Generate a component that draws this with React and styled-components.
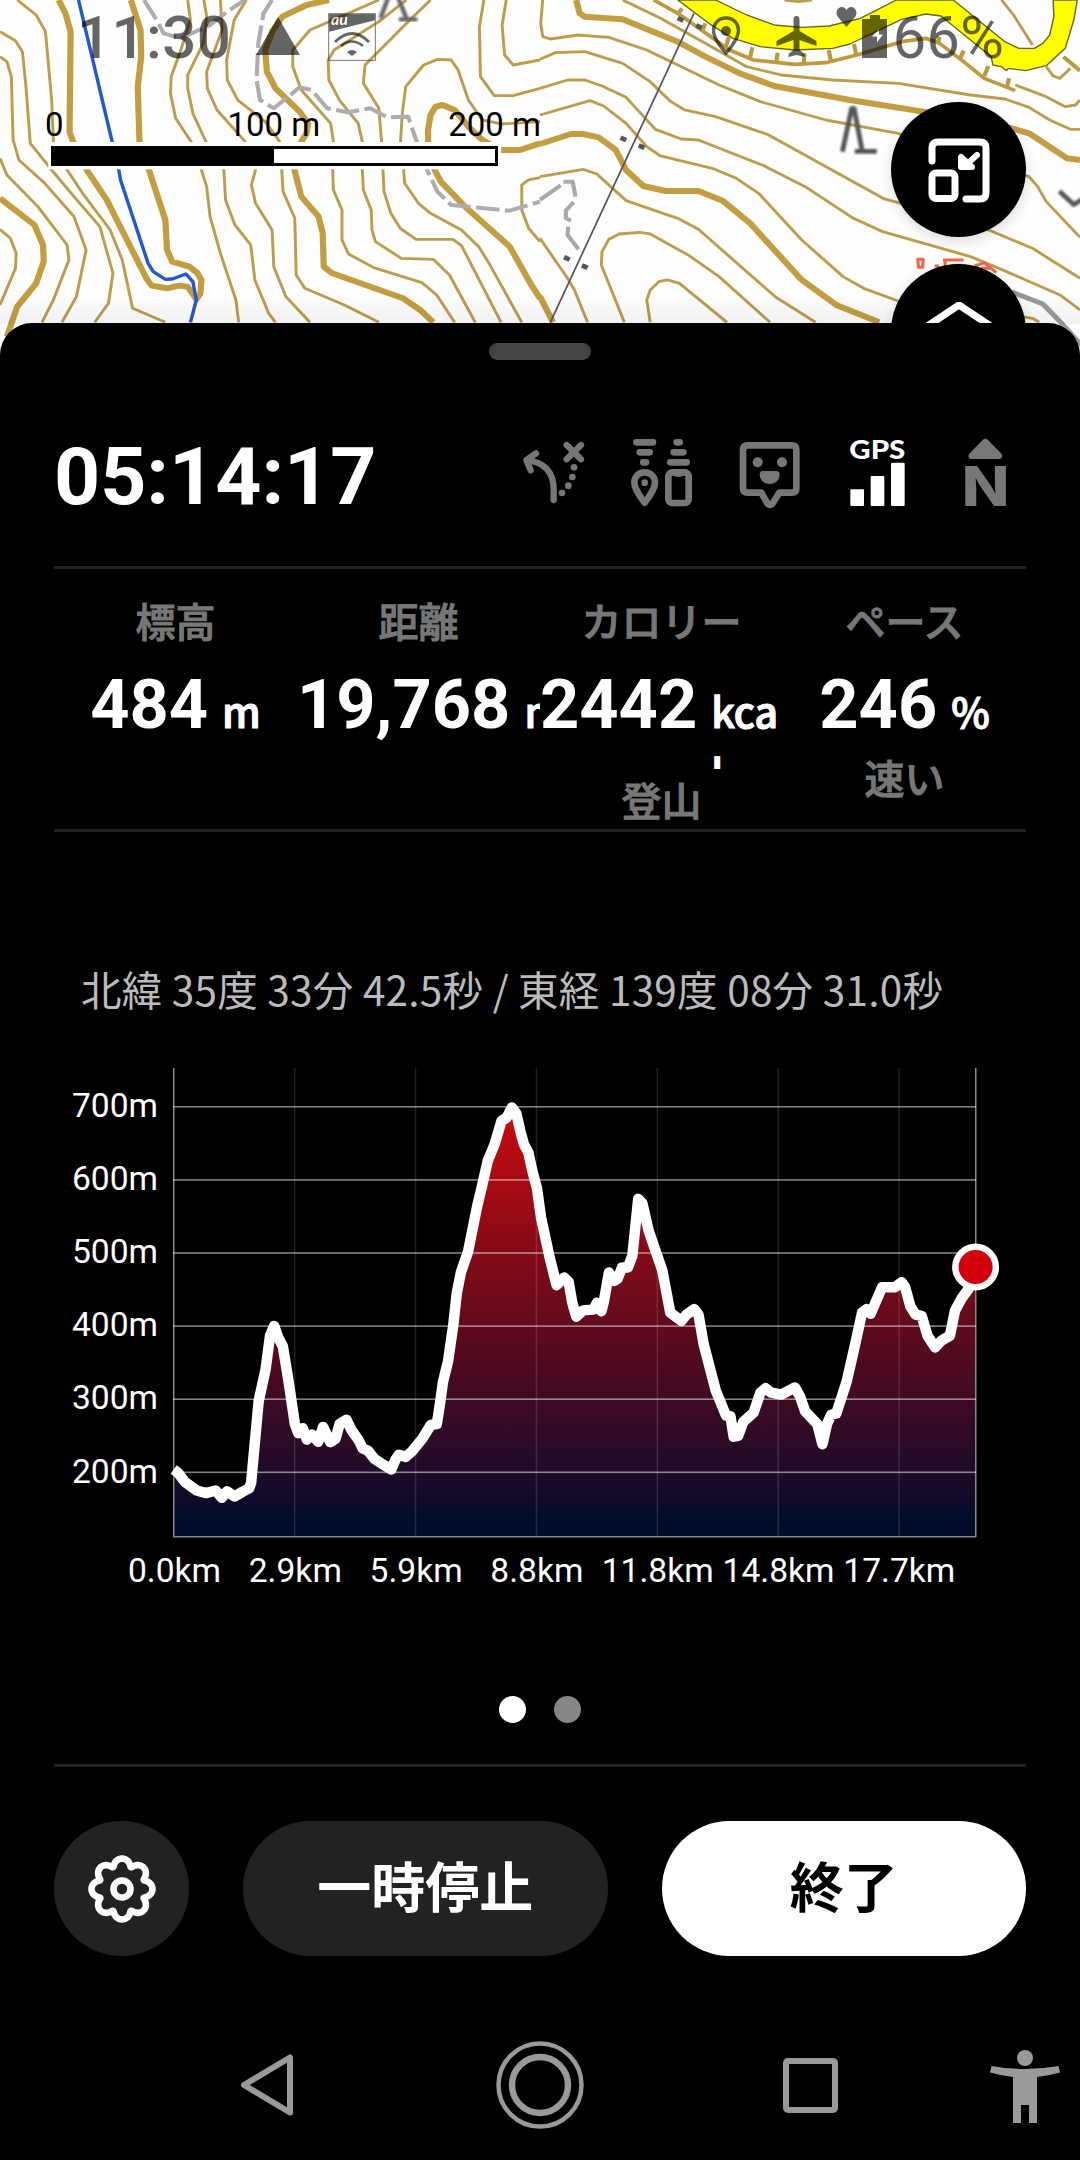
import styled, { createGlobalStyle } from "styled-components";

const stats = [
  { label: "標高", value: "484", unit: "m" },
  { label: "距離", value: "19,768", unit: "m" },
  { label: "カロリー", value: "2442", unit: "kcal", note: "登山", wrap: true },
  { label: "ペース", value: "246", unit: "%", note: "速い" },
];

const westThin = [
  "0,170 20,185 33,230 38,420 55,480 130,550 215,650 250,750 222,890 180,967",
  "0,95 45,122 65,155 75,255 88,430 150,510 215,590 290,680 328,820 315,910 275,967",
  "50,0 105,45 132,95 150,300 155,425 195,510 240,580 320,690 355,780 385,925 480,967",
  "0,475 20,525 110,620 195,735 200,780 155,900 122,967",
  "0,688 30,715 47,760 45,805 0,915",
  "545,0 553,60 525,150 497,230 495,280 510,355 555,425 585,510 600,560 610,650 640,760 685,900 693,967",
  "592,0 600,50 590,130 545,225 545,265 560,340 598,425 650,510 655,600 682,675 728,735 740,840 780,940 800,967",
  "640,0 645,90 600,215 602,265 630,330 712,425 742,510 730,555 742,610 790,690 795,800 830,890 900,967",
  "715,0 680,60 658,180 660,240 690,300 770,365 812,425 818,510 822,575 856,655 860,825 885,865 1000,915 1100,967",
  "1100,0 900,90 850,150 850,200 875,270 960,370 968,425 966,510 968,570 993,630 993,720 1012,762 1085,803 1225,848 1268,885 1320,967",
  "1180,0 1100,65 970,150 953,180 955,240 985,300 1040,370 1052,425 1052,510 1055,570 1078,630 1080,690 1090,725 1165,775 1258,778 1305,825 1380,967",
  "1250,0 1190,60 1060,195 1055,250 1100,325 1108,425 1112,510 1115,575 1135,640 1162,685 1208,718 1315,718 1340,737 1455,967",
  "1515,967 1420,790 1390,740 1340,690 1250,640 1215,610 1175,550 1172,510 1163,425 1168,340 1178,260 1230,195 1270,178 1310,180 1330,210 1360,300 1400,360 1455,372 1568,365",
  "1405,0 1392,80 1395,230 1435,287 1490,287 1568,265",
  "1470,0 1458,75 1465,165 1490,195 1568,180",
  "1568,533 1535,540 1515,555 1515,630 1535,685 1568,725",
];

const westThick = [
  "0,595 100,675 125,735 127,785 105,850 50,920 20,1010",
  "170,0 190,40 205,95 202,395 212,425 255,515 310,600 425,835 440,857 485,865 520,857 545,860 570,898 582,880 585,840 572,818 550,800 500,785 485,750 480,660 432,508 405,425 400,260 410,170 408,90 380,0",
  "955,0 890,15 820,50 790,95 770,150 775,215 800,265 870,335 895,370 890,400 875,425 855,470 855,510 875,590 925,650 937,700 940,800 965,820 1170,895 1220,930 1258,967",
  "1568,895 1540,850 1480,740 1350,620 1280,545 1262,510 1243,430 1243,390 1250,345 1265,320 1285,315 1320,330 1360,380 1400,420 1455,450 1510,450 1568,430",
];

const eastThin = [
  "8,0 2,70 8,110 30,117 110,105 200,112 310,150 520,255 640,305 830,360 1040,400 1420,530 1445,560 1470,605 1568,712",
  "0,178 45,158 130,155 240,190 320,245 380,305 420,330 510,350 660,403 1000,597 1040,608 1310,693 1430,745 1568,835",
  "0,265 80,240 130,240 180,258 250,292 335,388 410,417 460,420 650,497 770,560 910,655 995,695 1250,770 1310,795 1510,885 1568,930",
  "0,345 145,302 185,318 250,370 310,440 350,468 500,505 570,535 635,580 760,720 880,830 940,865 1040,903",
  "0,530 125,508 165,522 250,602 400,655 460,688 685,892 800,967",
  "0,715 80,835 100,870 138,967",
  "245,967 178,795 180,755 200,718 230,702 290,697 320,702 430,765 520,830 668,967",
  "320,967 310,900 320,870 345,845 370,840 405,850 543,967",
  "240,0 350,55 480,130 600,200 700,225 850,240 1040,250 1250,285 1350,297 1420,322 1480,360 1540,388 1568,388",
  "1380,255 1470,290 1525,320 1555,315 1568,300",
  "1470,200 1490,228 1510,235 1540,205",
  "1340,0 1375,45 1430,135",
  "710,0 750,5 790,0",
  "1400,950 1430,955 1450,967",
];

const eastThick = [
  "105,0 115,40 130,50 240,58 400,125 480,170 580,220 680,258 900,300 1130,338 1370,385 1420,400 1530,475 1568,480",
  "0,432 90,402 125,402 170,412 220,450 250,510 300,558 365,573 460,573 530,602 610,670 760,840 860,915 985,967",
  "0,890 38,967",
];

const cliff =
  "330,0 400,40 550,150 620,180 740,193 830,188 920,165 1050,125 1120,115 1160,130 1230,185 1290,235 1380,272";
const cliffTicks =
  "M400,45 412,25 M470,95 480,70 M540,140 548,110 M610,172 617,142 M686,188 690,158 M766,190 768,160 M845,183 838,150 M918,165 912,132 M1155,130 1160,110 M1218,180 1230,152 M1290,228 1302,198 M1355,265 1362,235 M1520,170 1568,212";

const poles = [
  [242, 417],
  [295, 440],
  [78, 775],
  [130, 800],
  [408, 58],
  [462, 80],
];

const road =
  "400,0 490,70 560,115 640,140 740,150 850,145 900,132 1050,58 1120,42 1165,48 1190,70 1310,170 1315,195 1340,200 1355,212 1360,205 1410,212 1470,197 1525,145 1550,60 1560,0 1490,0 1492,50 1480,105 1460,130 1435,145 1390,145 1350,125 1200,0 1035,0 930,55 840,78 760,82 680,75 600,45 510,0";

const outbound =
  "388,1258 400,1265 420,1287 455,1308 482,1314 510,1308 528,1325 543,1310 565,1322 590,1310 607,1303 613,1290 635,1095 655,1020 668,940 680,917 692,945 705,965 722,1050 740,1150 750,1172 763,1160 775,1187 790,1175 808,1192 822,1157 843,1193 858,1185 870,1150 890,1140 905,1165 925,1188 937,1208 952,1213 970,1232 1000,1248 1020,1258 1032,1235 1042,1223 1062,1228 1080,1215 1110,1185 1135,1152 1152,1150 1160,1110 1170,1050 1185,1000 1200,915 1210,840 1222,790 1243,740 1270,630 1282,590 1300,525 1320,485 1340,430 1355,422 1370,398 1383,412 1395,455 1405,485 1418,505 1430,550 1443,590 1455,660 1480,755 1500,820 1522,802 1535,812 1545,860 1557,895";
const inbound =
  "1577,880 1607,878 1617,862 1630,882 1637,860 1652,790 1667,810 1677,805 1690,778 1707,778 1720,750 1737,615 1749,625 1767,690 1807,785 1830,885 1862,905 1877,890 1900,877 1912,890 1927,960 1962,1070 1992,1130 2005,1132 2014,1180 2027,1178 2042,1145 2072,1123 2092,1075 2107,1065 2122,1075 2152,1080 2192,1063 2207,1085 2222,1120 2257,1150 2272,1198 2285,1150 2297,1128 2312,1125 2342,1050 2367,960 2387,885 2400,877 2412,888 2445,825 2482,825 2502,813 2512,825 2527,870 2542,890 2560,893 2577,940 2599,968 2617,952 2642,940 2657,880 2677,850 2697,828 2717,790";
const profile = `${outbound} ${inbound}`;

const heights = [700, 600, 500, 400, 300, 200];
const distances = [0, 2.9, 5.9, 8.8, 11.8, 14.8, 17.7];

const Lines = ({ points, width, color }) =>
  points.map((p) => (
    <polyline key={p} points={p} stroke={color} strokeWidth={width} />
  ));

const Map = () => (
  <MapCanvas viewBox="0 0 1080 360">
    <defs>
      <filter id="soft">
        <feGaussianBlur stdDeviation="3" />
      </filter>
      <linearGradient id="fade" x1="0" y1="0" x2="0" y2="1">
        <stop offset="0" stopColor="#000" stopOpacity="0" />
        <stop offset="1" stopColor="#000" stopOpacity="0.05" />
      </linearGradient>
    </defs>
    <g transform="scale(0.3444 0.3333)" fill="none" strokeLinejoin="round">
      <Lines points={westThin} width="8.5" color="#bb9d4c" />
      <Lines points={westThick} width="18" color="#c29e40" />
      <g stroke="#b1abb0" strokeWidth="12" strokeDasharray="68 16">
        <path d="M418,0 455,60 475,100 525,115 610,75 660,35 710,0" />
        <path d="M790,0 765,40 750,130 745,240 755,300 795,325 870,262 905,270 950,325 1010,337 1075,325 1125,352 1185,350 1210,425 1240,510 1270,575 1310,615 1380,622 1480,632 1568,605" />
      </g>
      <path
        d="M228,0 345,510 350,540 430,790 445,815 480,838 500,837 540,822 560,845 570,900 553,967"
        stroke="#2458d0"
        strokeWidth="10"
      />
      <path
        d="M1128,-10 1105,55 M1155,-10 1180,55 M1158,58H1212"
        stroke="#666"
        strokeWidth="13"
        filter="url(#soft)"
      />
      <rect x="140" y="426" width="1315" height="82" fill="#fff" />
    </g>
    <g
      transform="translate(540) scale(0.3444 0.3333)"
      fill="none"
      strokeLinejoin="round"
    >
      <Lines points={eastThin} width="8.5" color="#bb9d4c" />
      <Lines points={eastThick} width="18" color="#c29e40" />
      <polygon
        points={road}
        fill="#ffff00"
        stroke="#66661c"
        strokeWidth="4"
      />
      <polyline points={cliff} stroke="#c0993f" strokeWidth="11" />
      <path d={cliffTicks} stroke="#bb9845" strokeWidth="12" />
      <path
        d="M0,600 60,556 M68,545H95L103,590 M98,606 75,632 75,655 90,662 M82,680 80,705 112,748"
        stroke="#a9a9a9"
        strokeWidth="12"
      />
      <path d="M447,40 30,967" stroke="#555560" strokeWidth="5" />
      {poles.map(([x, y]) => (
        <rect
          key={x}
          x={x - 9}
          y={y - 7}
          width="18"
          height="14"
          fill="#555"
          transform={`rotate(25 ${x} ${y})`}
        />
      ))}
      <g stroke="#555" strokeWidth="14" filter="url(#soft)">
        <path d="M878,455 905,325H912L935,450 M914,454H978" />
        <path d="M1508,574 1550,614 1575,598" />
      </g>
      <g stroke="#ee6a48" strokeWidth="9">
        <path d="M1097,778h16l-2,24h-12z M1146,798h12 M1170,780h60 M1176,778v26 M1200,796h24 M1262,798 1290,788 1325,818 M1280,805h30" />
      </g>
      <path
        d="M1370,876 1460,912 1510,965 1580,1045"
        stroke="#999"
        strokeWidth="15"
      />
    </g>
    <rect y="290" width="1080" height="34" fill="url(#fade)" />
  </MapCanvas>
);

const StatusIcons = () => (
  <>
    <svg width="44" height="38" viewBox="0 0 44 38">
      <path d="M22 0 44 38H0z" />
    </svg>
    <Carrier>
      <svg width="48" height="48" viewBox="0 0 48 48">
        <path d="M2 0H46Q48 0 48 2V7L0 19V2Q0 0 2 0z" />
        <rect x=".6" y=".6" width="46.8" height="46.8" fill="none" stroke="#444" strokeWidth="1.2" />
        <path d="M7 29Q24 12 41 29" fill="none" stroke="#000" strokeWidth="3" />
        <path d="M13 33Q24 24 35 33" fill="none" stroke="#000" strokeWidth="2.6" />
        <path d="M24 43 19 39Q24 35 29 39z" />
        <text x="3" y="12" fill="#fff" fontSize="16" fontStyle="italic" fontWeight="700" fontFamily="Lato, sans-serif">
          au
        </text>
      </svg>
    </Carrier>
  </>
);

const PhoneIcons = () => (
  <svg width="178" height="54" viewBox="0 0 178 54">
    <g transform="translate(1 11)">
      <path
        d="M14 2C6 2 1.5 8 1.5 14.5 1.5 24 14 37 14 37S26.5 24 26.5 14.5C26.5 8 22 2 14 2z"
        fill="none"
        stroke="#000"
        strokeWidth="3.4"
      />
      <circle cx="14" cy="15" r="5" />
    </g>
    <path d="M85.5 11c2 0 3 1.6 3 4v11l17 10v5l-17-6v10l5 4v3l-8-2-8 2v-3l5-4V35l-17 6v-5l17-10V15c0-2.400 1-4 3-4z" />
    <path d="M135.5 22 127 12C122 5 131-2 135.5 5 140-2 149 5 144 12z" />
    <path
      fillRule="evenodd"
      d="M159 10h10v4h7v39h-25V14h8z M168 24 161 31.500h5v6l6-8h-4z"
    />
  </svg>
);

// eight wide lobes around the hub
const gear = (() => {
  const points = [];
  for (let i = 0; i < 160; i++) {
    const a = (i / 160) * Math.PI * 2;
    const t = a + 0.075 * Math.sin(a * 8);
    const r = 27 + 3.5 * Math.cos(a * 8);
    points.push(`${34 + r * Math.cos(t)},${34 + r * Math.sin(t)}`);
  }
  return points.join(" ");
})();

const Chart = () => (
  <ChartCanvas viewBox="0 0 1080 560">
    <defs>
      <linearGradient id="climb" gradientUnits="userSpaceOnUse" x1="0" y1="396" x2="0" y2="1418">
        <stop offset="0" stopColor="#cc0a0e" />
        <stop offset="0.17" stopColor="#a80a12" />
        <stop offset="0.5" stopColor="#620a1c" />
        <stop offset="0.84" stopColor="#200a28" />
        <stop offset="0.96" stopColor="#020c2a" />
        <stop offset="1" stopColor="#000c2a" />
      </linearGradient>
    </defs>
    <g transform="translate(40 -100) scale(0.3444 0.4209)">
      <polygon points={`388,1418 ${profile} 2717,1418`} fill="url(#climb)" />
    </g>
    {distances.map((d, i) => (
      <rect key={d} x={173 + i * 120.9} y="28" width="1.5" height="469" fill={i ? "#fff" : "#888"} opacity={i ? 0.13 : 1} />
    ))}
    <rect x="975" y="28" width="1.5" height="469" fill="#888" />
    {heights.map((h, i) => (
      <rect key={h} x="173" y={66 + i * 73.1} width="803" height="1.6" fill="#fff" opacity="0.5" />
    ))}
    <rect x="173" y="496" width="803" height="1.5" fill="#888" />
    <g transform="translate(40 -100) scale(0.3444 0.4209)">
      <polyline points={profile} fill="none" stroke="#fff" strokeWidth="10.5" strokeLinejoin="round" vectorEffect="non-scaling-stroke" />
    </g>
    <circle cx="975.6" cy="227" r="23.5" fill="#fff" />
    <circle cx="975.6" cy="227" r="17" fill="#d3000c" />
    <g fill="#fff" fontSize="33.6">
      {heights.map((h, i) => (
        <text key={h} x="158" y={77 + i * 73.1} textAnchor="end">
          {h}m
        </text>
      ))}
      {distances.map((d, i) => (
        <text key={d} x={174.5 + i * 120.8} y="542" textAnchor="middle">
          {d.toFixed(1)}km
        </text>
      ))}
    </g>
  </ChartCanvas>
);

const ModeIcons = () => (
  <Modes>
    <ModeIcon viewBox="24 21 216 216">
      <g fill="none" stroke="#777" strokeWidth="19" strokeLinecap="round" strokeLinejoin="round">
        <path d="M131,210V178C131,130 104,94 50,91 M78,70 49,90 62,121" />
        <path d="M170,45 213,88 M213,45 170,88" />
      </g>
      <g fill="#777">
        <circle cx="192" cy="112" r="10" />
        <circle cx="187" cy="141" r="10" />
        <circle cx="175" cy="167" r="10" />
        <circle cx="156" cy="189" r="10" />
      </g>
    </ModeIcon>
    <ModeIcon viewBox="348 21 216 216">
      <g fill="none" stroke="#777" strokeWidth="20" strokeLinecap="round" strokeLinejoin="round">
        <path d="M379,37h50 M389,67h30 M400,97h8 M500,37h9 M491,67h29 M481,97h49" />
        <path d="M404,127C386,127 373,140 373,158C373,178 404,218 404,218S435,178 435,158C435,140 422,127 404,127z" />
        <rect x="475" y="127" width="61" height="92" rx="12" />
      </g>
      <circle cx="404" cy="158" r="10" fill="#777" />
      <path d="M488,127h35v8q-17,12 -35,0z" fill="#777" />
    </ModeIcon>
    <ModeIcon viewBox="672 21 216 216">
      <path
        d="M713,46H846Q859,46 859,59V175Q859,188 846,188H808L788,220Q780,228 772,220L754,188H713Q699,188 699,175V59Q699,46 713,46z"
        fill="none"
        stroke="#777"
        strokeWidth="20"
        strokeLinejoin="round"
      />
      <circle cx="743" cy="97" r="15" fill="#777" />
      <circle cx="816" cy="97" r="15" fill="#777" />
      <path d="M760,123h38q12,0 11,12c-2,36 -57,36 -60,0q-1,-12 11,-12z" fill="#777" />
    </ModeIcon>
    <ModeIcon viewBox="216 21 216 216">
      <g fill="#fff">
        <text x="238" y="86" fontFamily="Lato, sans-serif" fontWeight="900" fontSize="82" textLength="168" lengthAdjust="spacingAndGlyphs">
          GPS
        </text>
        <rect x="241" y="178" width="41" height="50" rx="3" />
        <rect x="302" y="138" width="41" height="90" rx="3" />
        <rect x="363" y="98" width="41" height="130" rx="3" />
      </g>
    </ModeIcon>
    <ModeIcon viewBox="540 21 216 216">
      <path d="M638,30q8,-8 16,0l41,42q6,14 -8,15h-82q-14,-2 -8,-15z" fill="#777" />
      <text x="575" y="228" fill="#777" fontFamily="Inter, sans-serif" fontWeight="800" fontSize="165" textLength="143" lengthAdjust="spacingAndGlyphs">
        N
      </text>
    </ModeIcon>
  </Modes>
);

const App = () => {
  return (
    <Screen>
      <GlobalStyle />
      <MapArea>
        <Map />
        <StatusBar>
          <Clock>11:30</Clock>
          <StatusIcons />
          <StatusRight>
            <PhoneIcons />
            <span>66%</span>
          </StatusRight>
        </StatusBar>
        <Scale>
          <ScaleLabels>
            <span>0</span>
            <span>100 m</span>
            <span>200 m</span>
          </ScaleLabels>
          <ScaleBar />
        </Scale>
        <MapButtons>
          <RoundButton>
            <svg width="64" height="66" viewBox="0 0 64 66" fill="none" stroke="#fff" strokeWidth="7" strokeLinecap="round" strokeLinejoin="round">
              <path d="M5 24V11Q5 5 11 5H53Q59 5 59 11V56Q59 62 53 62H39" />
              <rect x="5" y="36" width="23" height="25.5" rx="4" />
              <path d="M50 18 39 28 M34 20v10h11z" strokeWidth="6" fill="#fff" />
            </svg>
          </RoundButton>
          <RoundButton>
            <svg width="80" height="60" viewBox="0 0 80 60" fill="none" stroke="#fff" strokeWidth="7">
              <path d="M4 27 40 3 76 27" strokeLinejoin="round" />
            </svg>
          </RoundButton>
        </MapButtons>
      </MapArea>
      <Sheet>
        <Handle />
        <Header>
          <Timer>05:14:17</Timer>
          <ModeIcons />
        </Header>
        <Stats>
          {stats.map((s) => (
            <Stat key={s.label}>
              <Label>{s.label}</Label>
              <Value $wrap={s.wrap}>
                <strong>{s.value}</strong>
                <Unit $wrap={s.wrap}>{s.unit}</Unit>
              </Value>
              {s.note && <Label>{s.note}</Label>}
            </Stat>
          ))}
        </Stats>
        <Coordinates>北緯 35度 33分 42.5秒 / 東経 139度 08分 31.0秒</Coordinates>
        <Chart />
        <Pager>
          <Dot $active />
          <Dot />
        </Pager>
        <Actions>
          <GearButton>
            <svg width="68" height="68" viewBox="0 0 68 68" fill="none" stroke="#fff" strokeWidth="6.6">
              <polygon points={gear} strokeLinejoin="round" />
              <circle cx="34" cy="34" r="8.5" />
            </svg>
          </GearButton>
          <PillButton>一時停止</PillButton>
          <PillButton $primary>終了</PillButton>
        </Actions>
        <NavBar>
          <MainKeys>
            <svg width="54" height="62" viewBox="0 0 54 62">
              <path d="M4 31 50 3.5V58.5z" />
            </svg>
            <svg width="91" height="88" viewBox="-3 0 91 88">
              <circle cx="44" cy="44" r="41.5" strokeWidth="4.5" />
              <circle cx="44" cy="44" r="28" strokeWidth="6.4" />
            </svg>
            <svg width="55" height="55" viewBox="0 0 55 55">
              <rect x="3" y="3" width="49" height="49" rx="2" />
            </svg>
          </MainKeys>
          <svg width="70" height="76" viewBox="0 -3 70 76" fill="#999">
            <circle cx="35" cy="8" r="8" />
            <path d="M1.5 16Q35 22 68.5 16L70 22.5Q58 26 47 27V74H39V55H31V74H23V27Q12 26 0 22.5z" />
          </svg>
        </NavBar>
      </Sheet>
    </Screen>
  );
};

const GlobalStyle = createGlobalStyle`
  body {
    margin: 0;
    background: #000;
  }
`;

const Screen = styled.div`
  width: 1080px;
  height: 2160px;
  overflow: hidden;
  background: #000;
  color: #fff;
  font-family: Roboto, "Noto Sans CJK JP", sans-serif;

  svg {
    display: block;
    flex-shrink: 0;
  }
`;

const MapArea = styled.div`
  position: relative;
  height: 323px;
`;

const MapCanvas = styled.svg`
  width: 1080px;
  height: 360px;
  background: #fefefe;
`;

const StatusBar = styled.div`
  position: absolute;
  top: 0;
  left: 0;
  display: flex;
  align-items: center;
  box-sizing: border-box;
  width: 1080px;
  height: 74px;
  padding: 0 76px 0 77px;
  color: #000;
  font-size: 60px;
  opacity: 0.6;

  > svg {
    margin: 0 28px 2px 0;
  }
`;

const Clock = styled.span`
  width: 179px;
  font-weight: 500;
  letter-spacing: 0.4px;
`;

const Carrier = styled.div`
  display: flex;
`;

const StatusRight = styled.div`
  display: flex;
  align-items: center;
  margin-left: auto;

  svg {
    margin: 0 4px 10px 0;
  }
`;

const Scale = styled.div`
  position: absolute;
  top: 106px;
  left: 45px;
  width: 496px;
  color: #000;
`;

const ScaleLabels = styled.div`
  display: flex;
  justify-content: space-between;
  height: 40px;
  line-height: 37px;
  font-size: 33px;

  span:nth-child(2) {
    margin-left: 36px;
  }
`;

const ScaleBar = styled.div`
  box-sizing: border-box;
  width: 447px;
  height: 20px;
  margin-left: 6px;
  border: 3px solid #000;
  background: linear-gradient(90deg, #000 50%, #fff 50%);
`;

const MapButtons = styled.div`
  position: absolute;
  top: 102px;
  left: 891px;
  display: grid;
  gap: 27px;
`;

const RoundButton = styled.div`
  display: flex;
  align-items: center;
  justify-content: center;
  width: 135px;
  height: 135px;
  border-radius: 50%;
  background: #000;
  box-shadow: 0 4px 14px rgba(0, 0, 0, 0.15);
`;

const Sheet = styled.div`
  position: relative;
  height: 1837px;
  border-radius: 32px 32px 0 0;
  background: #000;
  overflow: hidden;
`;

const Handle = styled.div`
  width: 102px;
  height: 17px;
  margin: 20px auto 0;
  border-radius: 9px;
  background: #444;
`;

const Header = styled.div`
  display: flex;
  align-items: center;
  justify-content: space-between;
  height: 206px;
  margin: 0 54px;
  padding: 0 4px 0 0;
  border-bottom: 3px solid #222;
`;

const Timer = styled.div`
  padding-top: 28px;
  font-size: 80.5px;
  line-height: 96px;
  font-weight: 700;
`;

const Modes = styled.div`
  display: flex;
  gap: 36px;
  padding-top: 20px;
`;

const ModeIcon = styled.svg`
  width: 72px;
  height: 72px;
`;

const Stats = styled.div`
  display: grid;
  grid-template-columns: repeat(4, 243px);
  height: 260px;
  margin: 0 54px;
  border-bottom: 3px solid #222;
`;

const Stat = styled.div`
  padding-top: 21px;
  text-align: center;
  overflow: hidden;
`;

const Label = styled.div`
  height: 60px;
  line-height: 60px;
  font-family: "Noto Sans CJK JP", sans-serif;
  font-size: 40px;
  font-weight: 500;
  color: #777;
  -webkit-text-stroke: 1px #777;
`;

const Value = styled.div`
  display: flex;
  align-items: baseline;
  justify-content: ${({ $wrap }) => ($wrap ? "flex-start" : "safe center")};
  height: ${({ $wrap }) => ($wrap ? "119px" : "97px")};
  overflow: hidden;
  white-space: nowrap;

  strong {
    font-size: 68.5px;
    line-height: 110px;
  }
`;

const Unit = styled.span`
  width: ${({ $wrap }) => ($wrap ? "73px" : "auto")};
  margin-left: 14px;
  white-space: normal;
  word-break: break-all;
  text-align: left;
  font-family: "Noto Sans CJK JP", sans-serif;
  font-size: 41px;
  line-height: 61px;
  font-weight: 500;
  -webkit-text-stroke: 1.2px #fff;
`;

const Coordinates = styled.div`
  height: 60px;
  margin: 127px 0 0 81px;
  line-height: 60px;
  font-family: "Noto Sans CJK JP", sans-serif;
  font-size: 40.5px;
  letter-spacing: 0.25px;
  color: #bbb;
  white-space: nowrap;
`;

const ChartCanvas = styled.svg`
  width: 1080px;
  height: 560px;
  margin-top: 21px;
`;

const Pager = styled.div`
  display: flex;
  justify-content: center;
  gap: 28px;
  height: 68px;
  margin: 0 54px;
  padding-top: 96px;
  border-bottom: 3px solid #222;
`;

const Dot = styled.div`
  width: 27px;
  height: 27px;
  border-radius: 50%;
  background: ${({ $active }) => ($active ? "#fff" : "#868686")};
`;

const Actions = styled.div`
  display: grid;
  grid-template-columns: 135px 1fr 1fr;
  gap: 54px;
  margin: 54px 54px 0;
`;

const GearButton = styled.div`
  display: flex;
  align-items: center;
  justify-content: center;
  height: 135px;
  border-radius: 50%;
  background: #222;
`;

const PillButton = styled.div`
  height: 135px;
  border-radius: 68px;
  line-height: 128px;
  text-align: center;
  font-family: "Noto Sans CJK JP", sans-serif;
  font-size: 54px;
  font-weight: 700;
  color: ${({ $primary }) => ($primary ? "#000" : "#fff")};
  background: ${({ $primary }) => ($primary ? "#fff" : "#222")};
`;

const NavBar = styled.div`
  display: flex;
  align-items: center;
  justify-content: space-between;
  height: 88px;
  margin: 85px 20px 0 240px;
`;

const MainKeys = styled.div`
  display: flex;
  align-items: center;
  justify-content: space-between;
  width: 598px;

  svg {
    fill: none;
    stroke: #999;
    stroke-width: 6;
    stroke-linejoin: round;
  }
`;

export default App;
